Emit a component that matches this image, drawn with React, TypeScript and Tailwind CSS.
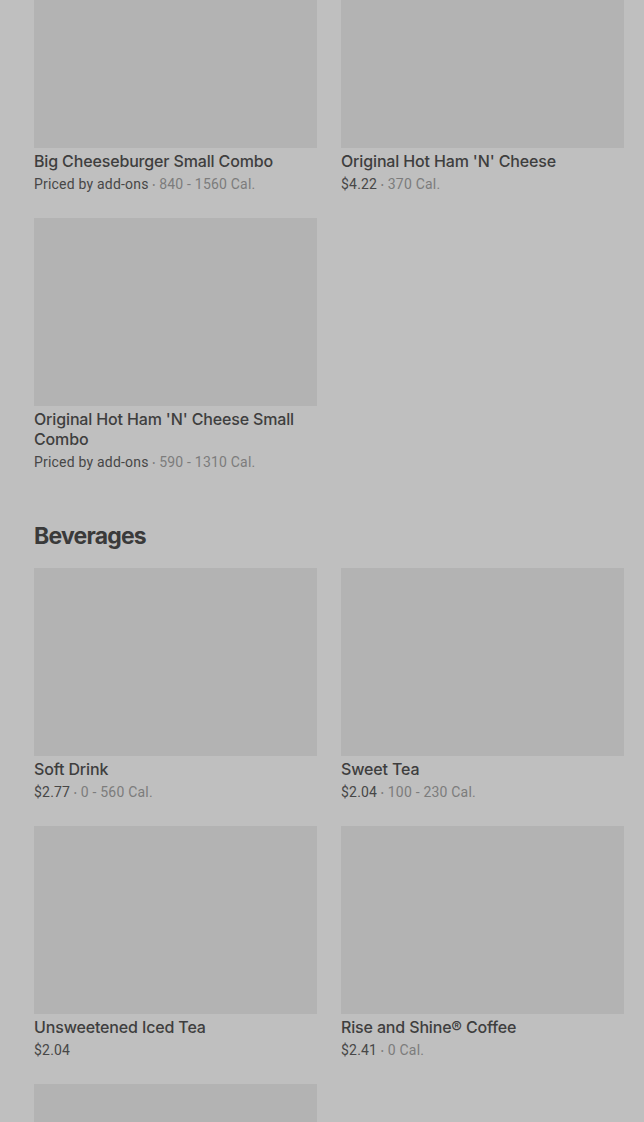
const combos = [
  { name: "Big Cheeseburger Small Combo", price: "Priced by add-ons", cal: "840 - 1560 Cal." },
  { name: "Original Hot Ham 'N' Cheese", price: "$4.22", cal: "370 Cal." },
  { name: "Original Hot Ham 'N' Cheese Small Combo", price: "Priced by add-ons", cal: "590 - 1310 Cal." },
];

const beverages = [
  { name: "Soft Drink", price: "$2.77", cal: "0 - 560 Cal." },
  { name: "Sweet Tea", price: "$2.04", cal: "100 - 230 Cal." },
  { name: "Unsweetened Iced Tea", price: "$2.04", cal: "" },
  { name: "Rise and Shine® Coffee", price: "$2.41", cal: "0 Cal." },
  { name: "", price: "", cal: "" },
];

type Item = { name: string; price: string; cal: string };

function Card({ item }: { item: Item }) {
  return (
    <div className="flex flex-col">
      <div className="h-[188px] w-full bg-[#b3b3b3]" />
      <div className="mt-[3px] text-[16px] leading-5 font-medium tracking-[-0.15px] text-[#3e3e3e]">
        {item.name}
      </div>
      <div className="mt-[3px] h-5 font-['Roboto',sans-serif] text-[14px] leading-5 tracking-[0.2px] text-[#474747]">
        {item.price}
        {item.cal && (
          <span className="text-[#7c7c7c]">
            {" "}
            <span className="relative -top-px text-[9px] leading-[0]">•</span> {item.cal}
          </span>
        )}
      </div>
    </div>
  );
}

export default function App() {
  return (
    <div
      className="h-[1122px] overflow-hidden bg-[#bfbfbf]"
      style={{ fontFamily: "Inter, 'Noto Sans', sans-serif" }}
    >
      <div className="-mt-[40px] pl-[34px] pr-[20px]">
        {/* Combos */}
        <div className="grid grid-cols-2 gap-x-6 gap-y-6">
          {combos.map((c) => (
            <Card key={c.name} item={c} />
          ))}
        </div>

        {/* Beverages */}
        <h2 className="mt-12 mb-4 text-[23px] leading-8 font-bold tracking-[-0.8px] text-[#3a3a3a]">
          Beverages
        </h2>
        <div className="grid grid-cols-2 gap-x-6 gap-y-6">
          {beverages.map((b, i) => (
            <Card key={i} item={b} />
          ))}
        </div>
      </div>
    </div>
  );
}
